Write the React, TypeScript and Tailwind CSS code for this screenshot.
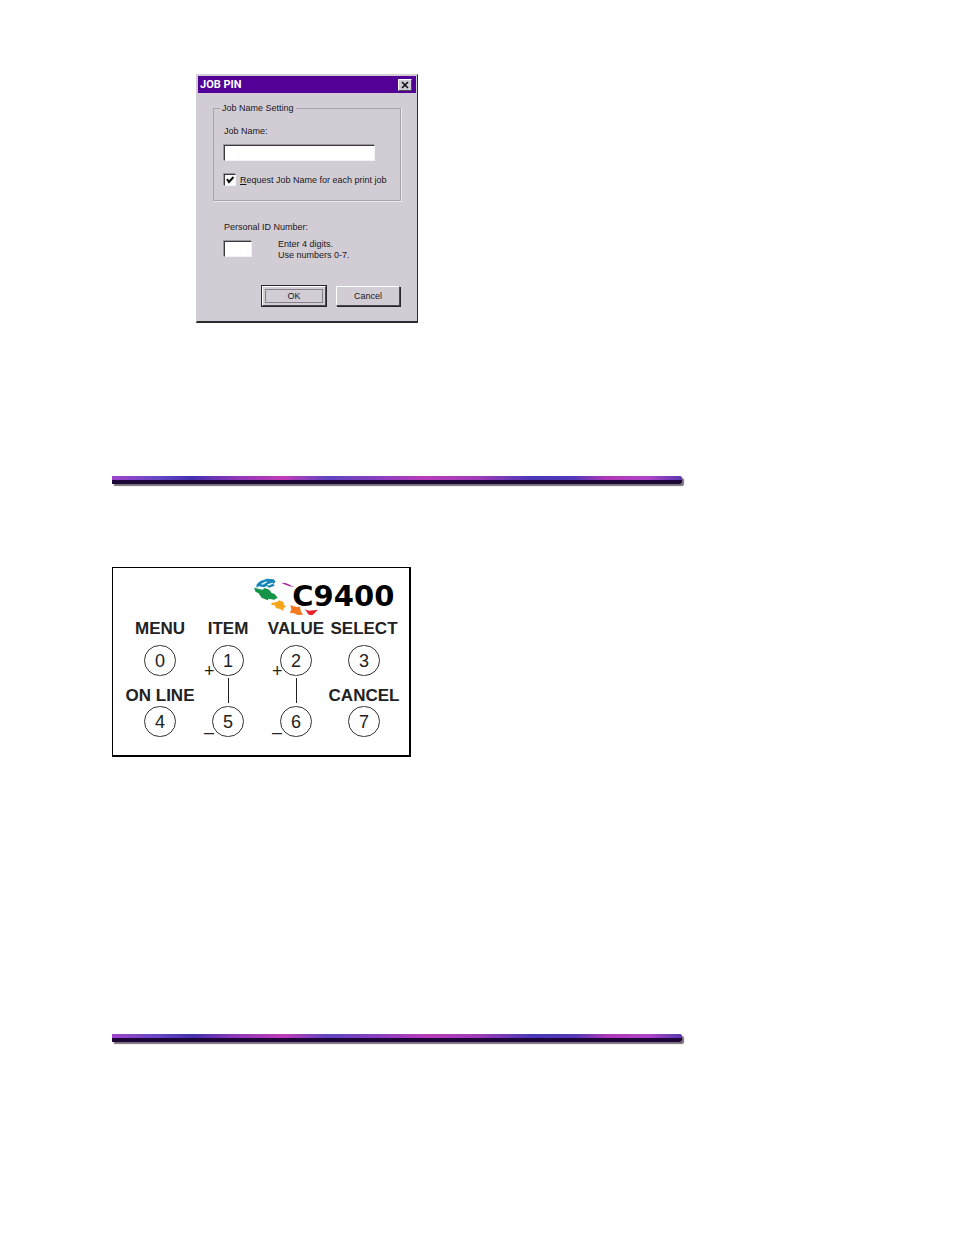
import { useState } from 'react';

interface PanelKey {
  digit: number;
  label?: string;
  sign?: string;
  linked?: boolean;
}

const topKeys: PanelKey[] = [
  { digit: 0, label: 'MENU' },
  { digit: 1, label: 'ITEM', sign: '+', linked: true },
  { digit: 2, label: 'VALUE', sign: '+', linked: true },
  { digit: 3, label: 'SELECT' },
];

const bottomKeys: PanelKey[] = [
  { digit: 4, label: 'ON LINE' },
  { digit: 5, sign: '–' },
  { digit: 6, sign: '–' },
  { digit: 7, label: 'CANCEL' },
];

const sunken =
  'bg-white border border-t-[#3c383e] border-l-[#3c383e] border-b-[#f4f2f5] border-r-[#f4f2f5] shadow-[-1px_-1px_0_#9a959c] outline-none';
const raised =
  'h-5 w-16 bg-[#d2cdd4] border border-t-white border-l-white border-b-[#4a464c] border-r-[#4a464c] shadow-[1px_1px_0_#2a272c] leading-3';

function JobPinDialog() {
  const [jobName, setJobName] = useState('');
  const [pin, setPin] = useState('');
  const [request, setRequest] = useState(true);

  return (
    <form
      role="dialog"
      aria-labelledby="dialog-title"
      onSubmit={(e) => e.preventDefault()}
      className="w-[222px] bg-[#d2cdd4] border border-t-[#d2cdd4] border-l-[#d2cdd4] border-b-2 border-b-[#2d292f] border-r-[#2d292f] p-px pb-[15px] font-['Liberation_Sans',sans-serif] text-[9px] leading-3 text-[#1a171c]"
    >
      <div className="flex h-[17px] items-center justify-between bg-[#520096] pl-0.5 pr-1">
        <h1
          id="dialog-title"
          className="font-['Roboto','Liberation_Sans',sans-serif] text-[11px] font-bold leading-3 text-white"
        >
          JOB PIN
        </h1>
        <button
          type="button"
          aria-label="Close"
          className="flex h-3 w-[14px] items-center justify-center border border-t-white border-l-white border-b-[#4a464c] border-r-[#4a464c] bg-[#d2cdd4]"
        >
          <svg viewBox="0 0 8 8" className="size-2" stroke="#111" strokeWidth="1.6">
            <path d="M1 1l6 6M7 1L1 7" />
          </svg>
        </button>
      </div>

      <div className="px-[15px] pt-[9px]">
        <fieldset className="border border-[#a9a4ab] pl-[10px] pb-[14px] shadow-[1px_1px_0_#eeebf0]">
          <legend className="-ml-1 px-0.5">Job Name Setting</legend>
          <label htmlFor="job-name" className="mt-[11px] block">
            Job Name:
          </label>
          <input
            id="job-name"
            value={jobName}
            onChange={(e) => setJobName(e.target.value)}
            className={`mt-2 block h-4 w-[151px] px-1 ${sunken}`}
          />
          <div className="mt-[13px] flex items-center gap-1">
            <span className="relative flex">
              <input
                id="request-name"
                type="checkbox"
                checked={request}
                onChange={(e) => setRequest(e.target.checked)}
                className={`size-3 appearance-none ${sunken}`}
              />
              {request && (
                <svg
                  viewBox="0 0 12 12"
                  className="pointer-events-none absolute inset-0 size-3"
                  fill="none"
                  stroke="#111"
                  strokeWidth="2"
                >
                  <path d="M3 5l2 3l4.500-5" />
                </svg>
              )}
            </span>
            <label htmlFor="request-name" className="whitespace-nowrap">
              <span className="underline">R</span>equest Job Name for each print job
            </label>
          </div>
        </fieldset>

        <div className="mt-5 pl-[11px]">
          <label htmlFor="pin" className="block">
            Personal ID Number:
          </label>
          <div className="mt-[6px] flex items-start gap-[26px]">
            <input
              id="pin"
              maxLength={4}
              value={pin}
              onChange={(e) => setPin(e.target.value)}
              className={`mt-[2px] h-4 w-7 px-0.5 ${sunken}`}
            />
            <p className="leading-[11px]">
              Enter 4 digits.
              <br />
              Use numbers 0-7.
            </p>
          </div>
        </div>

        <div className="mt-[25px] flex justify-end gap-[10px] pr-px">
          <button type="submit" className={`outline outline-[#29252b] ${raised}`}>
            <span className="mx-0.5 block border border-[#858087]">OK</span>
          </button>
          <button type="button" className={raised}>
            Cancel
          </button>
        </div>
      </div>
    </form>
  );
}

function Divider() {
  return (
    <hr className="h-2 max-w-[570px] rounded-r-xs border-0 border-b-4 border-[#1d0638] bg-[linear-gradient(90deg,#a044cc,#6548c4_8%,#4430b0_14%,#9038b8_22%,#c03cb8_30%,#6044c0_38%,#8040c0_45%,#b83cbc_55%,#a03cb8_64%,#4838b8_74%,#5438b8_81%,#b038b8_87%,#b044c8_94%,#5838b0)] shadow-[2px_2px_1px_#77707a]" />
  );
}

function Logo() {
  return (
    <svg viewBox="24 24 435 114" className="h-[38px] w-[145px]" role="img" aria-label="C9400">
      <path fill="#1687b9" d="M35 43l11-10 20-7 20 2 6 7-7 7 4 5-16 6-8-5-8 4-15-3-8 4z" />
      <path fill="#fff" d="M48 42l16-8 2 3-13 7zM67 43l16-5 1 3-15 6z" />
      <path fill="#159447" d="M27 53l12 3 14 3 6-5 14 5 7 10 9 3 9 11-11 6-16-3-3 5-18-8-10-14-8-3z" />
      <path fill="#f6a51b" d="M78 99l18-3 7-5 12 5 3 10 6 4-9 4 2 9-14-7-9-1-5-9-9-2z" />
      <path fill="#f47920" d="M136 106l19 5 10-1 2 12 7 12-16 1-11-5-13-2 5-9z" />
      <path fill="#e5242b" d="M180 118l12 4 26-3-8 10-9 7-10-2z" />
      <path fill="#a72b9c" d="M108 38l14 1 12 5 14 7-17-3-10-4z" />
      <text
        x="142"
        y="108"
        fontSize="87"
        fontWeight="bold"
        className="font-['DejaVu_Sans',sans-serif]"
        fill="#000"
      >
        C9400
      </text>
    </svg>
  );
}

function KeyCell({ digit, label, sign, linked }: PanelKey) {
  return (
    <div className="flex flex-col items-center">
      <span className="h-5 whitespace-nowrap text-[17px] font-bold leading-5">{label}</span>
      <div className={digit < 4 ? 'relative mt-[6px]' : 'relative'}>
        <button
          type="button"
          aria-label={label ? `${label} ${digit}` : `${digit}`}
          className="block h-[31px] w-8 rounded-full border border-[#333] text-[18px] leading-7"
        >
          {digit}
        </button>
        {sign && (
          <span className="absolute -left-2 top-4 text-[18px] leading-5">{sign}</span>
        )}
        {linked && <span className="absolute left-4 top-[33px] h-[25px] w-px bg-[#222]" />}
      </div>
    </div>
  );
}

function ControlPanel() {
  return (
    <section className="w-[299px] border border-r-2 border-b-2 border-black bg-white pl-[13px] pr-[11px] pb-[18px] pt-[10px] font-['Liberation_Sans',sans-serif] text-[#222]">
      <div className="flex justify-end">
        <Logo />
      </div>
      <div className="mt-[3px] grid grid-cols-4">
        {topKeys.map((k) => (
          <KeyCell key={k.digit} {...k} />
        ))}
      </div>
      <div className="mt-[10px] grid grid-cols-4">
        {bottomKeys.map((k) => (
          <KeyCell key={k.digit} {...k} />
        ))}
      </div>
    </section>
  );
}

export default function App() {
  return (
    <main className="min-h-screen bg-white px-28 pb-48 pt-[74px]">
      <div className="pl-[84px]">
        <JobPinDialog />
      </div>
      <div className="mt-[153px]">
        <Divider />
      </div>
      <div className="mt-[83px]">
        <ControlPanel />
      </div>
      <div className="mt-[277px]">
        <Divider />
      </div>
    </main>
  );
}
